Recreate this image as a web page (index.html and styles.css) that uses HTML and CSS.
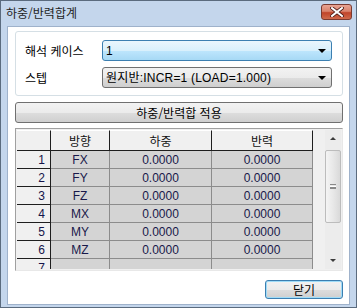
FILE: index.html
```html
<!DOCTYPE html>
<html lang="ko">
<head>
  <meta charset="UTF-8">
  <title>하중/반력합계</title>
  <link rel="stylesheet" href="styles.css">
</head>
<body>
<div class="window">
  <div class="titlebar">
    <span class="title">하중/반력합계</span>
    <div class="close-x">
      <svg width="14" height="10" viewBox="0 0 14 10">
        <path d="M2 1 L12 9 M12 1 L2 9" stroke="#4a1a14" stroke-width="3.6" stroke-linecap="square"/>
        <path d="M2 1 L12 9 M12 1 L2 9" stroke="#ffffff" stroke-width="2" stroke-linecap="square"/>
      </svg>
    </div>
  </div>

  <div class="client">
    <div class="group">
      <div class="field">
        <label>해석 케이스</label>
        <div class="combo focused"><span>1</span><span class="arrow"></span></div>
      </div>
      <div class="field">
        <label>스텝</label>
        <div class="combo"><span>원지반:INCR=1 (LOAD=1.000)</span><span class="arrow"></span></div>
      </div>
    </div>

    <button class="apply">하중/반력합 적용</button>

    <div class="grid">
      <div class="grid-body">
        <table>
          <tr class="head">
            <th class="rowhead"></th>
            <th class="c-dir">방향</th>
            <th class="c-load">하중</th>
            <th class="c-react">반력</th>
          </tr>
          <tr><th class="rowhead">1</th><td>FX</td><td>0.0000</td><td>0.0000</td></tr>
          <tr><th class="rowhead">2</th><td>FY</td><td>0.0000</td><td>0.0000</td></tr>
          <tr><th class="rowhead">3</th><td>FZ</td><td>0.0000</td><td>0.0000</td></tr>
          <tr><th class="rowhead">4</th><td>MX</td><td>0.0000</td><td>0.0000</td></tr>
          <tr><th class="rowhead">5</th><td>MY</td><td>0.0000</td><td>0.0000</td></tr>
          <tr><th class="rowhead">6</th><td>MZ</td><td>0.0000</td><td>0.0000</td></tr>
          <tr><th class="rowhead">7</th><td></td><td></td><td></td></tr>
        </table>
      </div>
      <div class="scrollbar">
        <div class="sb-btn"><span class="up"></span></div>
        <div class="sb-track">
          <div class="thumb"><span class="grip"></span></div>
        </div>
        <div class="sb-btn"><span class="down"></span></div>
      </div>
    </div>

    <div class="footer">
      <button class="close">닫기</button>
    </div>
  </div>
</div>
</body>
</html>
```

FILE: styles.css
```css
* {
  margin: 0;
  padding: 0;
  box-sizing: border-box;
}
body {
  background: #ffffff;
  font-family: "Liberation Sans", "Noto Sans CJK KR", sans-serif;
  font-size: 12px;
  color: #000;
}
.window {
  width: 357px;
  height: 308px;
  border: 1px solid #5b6b7e;
  background: #c4d6ec;
  padding: 0 6px 2px 6px;
  display: flex;
  flex-direction: column;
}
.titlebar {
  height: 25px;
  display: flex;
  align-items: center;
  justify-content: space-between;
}
.title {
  font-family: "Noto Sans CJK KR", sans-serif;
  font-size: 12px;
  line-height: 14px;
  color: #1e1e1e;
  margin-left: -1px;
  margin-top: -1px;
}
.close-x {
  width: 31px;
  height: 16px;
  margin-right: -2px;
  margin-top: -4px;
  border: 1px solid #7a3a30;
  border-radius: 3px;
  background: linear-gradient(#e8a493 0%, #d9826c 45%, #c0442a 55%, #cf6a4c 100%);
  display: flex;
  align-items: center;
  justify-content: center;
}
.client {
  flex: 1;
  background: #ffffff;
  border: 1px solid #9fb2cb;
  padding: 4px 6px 0 7px;
  display: flex;
  flex-direction: column;
}
.group {
  height: 65px;
  border: 1px solid #d5dfe5;
  border-radius: 3px;
  padding: 8px 10px 0 9px;
  display: flex;
  flex-direction: column;
  gap: 6px;
}
.field {
  display: flex;
  align-items: center;
  justify-content: space-between;
}
.field label {
  font-family: "Noto Sans CJK KR", sans-serif;
  font-size: 12px;
  line-height: 14px;
  color: #000;
}
.combo {
  width: 230px;
  height: 21px;
  border: 1px solid #707070;
  border-radius: 3px;
  background: linear-gradient(#f2f2f2 0%, #ebebeb 50%, #dddddd 51%, #cfcfcf 100%);
  display: flex;
  align-items: center;
  justify-content: space-between;
  padding: 0 5px 0 3px;
  font-size: 12px;
  line-height: 14px;
  letter-spacing: 0.2px;
}
.combo.focused {
  border-color: #3c7fb1;
  background: linear-gradient(#eaf6fd 0%, #d9f0fc 50%, #bee6fd 51%, #a7d9f5 100%);
}
.arrow {
  width: 0;
  height: 0;
  border-left: 4px solid transparent;
  border-right: 4px solid transparent;
  border-top: 4px solid #000;
}
.apply {
  margin-top: 6px;
  height: 21px;
  border: 1px solid #707070;
  border-radius: 3px;
  background: linear-gradient(#f2f2f2 0%, #ebebeb 50%, #dddddd 51%, #cfcfcf 100%);
  font-family: "Noto Sans CJK KR", sans-serif;
  font-size: 12px;
  line-height: 14px;
  color: #000;
}
.grid {
  margin-top: 5px;
  height: 143px;
  border: 1px solid #a0a0a0;
  border-right-color: #e8e8e8;
  border-bottom-color: #e8e8e8;
  padding: 1px;
  background: #f0f0f0;
  display: flex;
  justify-content: space-between;
}
.grid-body {
  overflow: hidden;
}
table {
  border-collapse: separate;
  border-spacing: 0;
  table-layout: fixed;
  width: 296px;
}
th, td {
  padding: 0;
  font-weight: normal;
  font-size: 12px;
  line-height: 14px;
  white-space: nowrap;
  overflow: hidden;
}
tr {
  height: 18px;
}
tr.head {
  height: 21px;
}
tr.head th {
  background: #f0f0f0;
  border-right: 1px solid #1e1e1e;
  border-bottom: 1px solid #1e1e1e;
  border-top: 1px solid #ffffff;
  font-family: "Noto Sans CJK KR", sans-serif;
  color: #111;
  text-align: center;
}
th.rowhead {
  width: 34px;
  background: #f0f0f0;
  border-right: 1px solid #1e1e1e;
  border-bottom: 1px solid #1e1e1e;
  text-align: right;
  padding-right: 5px;
  color: #14144a;
}
.c-dir { width: 59px; }
.c-load { width: 102px; }
.c-react { width: 101px; }
td {
  background: #d4d4d4;
  border-right: 1px solid #8c8c8c;
  border-bottom: 1px solid #8c8c8c;
  text-align: center;
  color: #18184a;
}
.scrollbar {
  width: 16px;
  display: flex;
  flex-direction: column;
  background: #ececec;
}
.sb-btn {
  height: 17px;
  display: flex;
  align-items: center;
  justify-content: center;
}
.up, .down {
  width: 0;
  height: 0;
  border-left: 3px solid transparent;
  border-right: 3px solid transparent;
}
.up {
  border-bottom: 3px solid #3c3c3c;
}
.down {
  border-top: 3px solid #3c3c3c;
}
.sb-track {
  flex: 1;
  padding: 3px 0 29px 0;
}
.thumb {
  height: 100%;
  border: 1px solid #bcbcbc;
  border-radius: 2px;
  background: linear-gradient(90deg, #f4f4f4 0%, #e8e8e8 50%, #d9d9d9 100%);
  display: flex;
  align-items: center;
  justify-content: center;
}
.grip {
  width: 6px;
  height: 5px;
  border-top: 1px solid #8a8a8a;
  border-bottom: 1px solid #8a8a8a;
  background: linear-gradient(#ffffff 0 1px, #8a8a8a 1px 2px, transparent 2px);
  background-position: 0 1px;
  background-repeat: no-repeat;
}
.footer {
  display: flex;
  justify-content: flex-end;
  margin-top: 9px;
}
.close {
  width: 78px;
  height: 19px;
  border: 1px solid #3c7fb1;
  border-radius: 3px;
  box-shadow: inset 0 0 0 1px #9fdcf8;
  background: linear-gradient(#f2f2f2 0%, #ebebeb 50%, #dddddd 51%, #cfcfcf 100%);
  font-family: "Noto Sans CJK KR", sans-serif;
  font-size: 12px;
  line-height: 14px;
  color: #000;
}
```
